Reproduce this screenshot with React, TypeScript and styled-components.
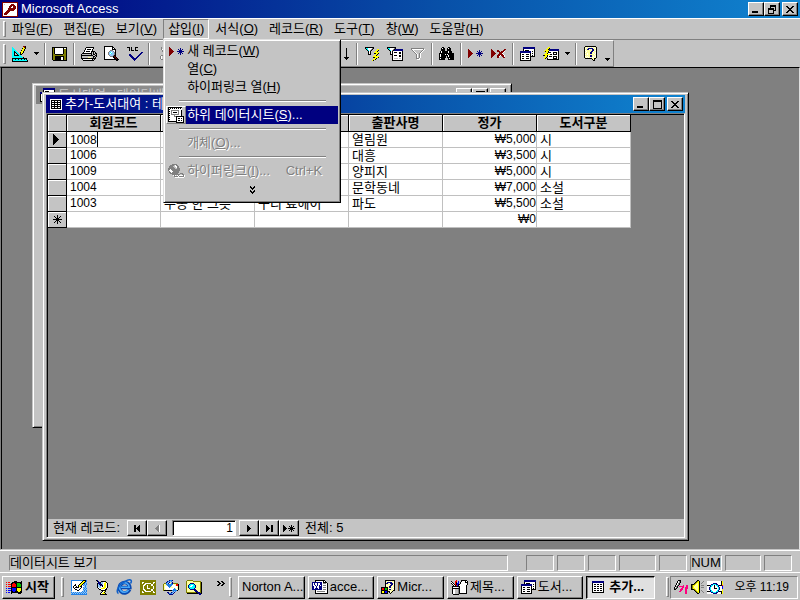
import React from "react";
import styled, { createGlobalStyle, css } from "styled-components";

const Global = createGlobalStyle`
  * { box-sizing: border-box; }
  body { margin: 0; overflow: hidden; background: #808080; }
  body, button, input, table {
    font-family: "Liberation Sans", "Noto Sans CJK KR", sans-serif;
    font-size: 13px;
    line-height: 16px;
    color: #000;
  }
  button, input { border-radius: 0; margin: 0; padding: 0; }
  svg { display: block; flex: none; }
`;

const FACE = "#c4c4c4";
const raised = css`
  border: 1px solid;
  border-color: #fff #000 #000 #fff;
  box-shadow: inset -1px -1px 0 #808080;
`;
const sunken = css`
  border: 1px solid;
  border-color: #808080 #fff #fff #808080;
`;

/* ---------- pixel drawings ---------- */

const PALETTE: Record<string, string> = {
  k: "#000000", w: "#ffffff", r: "#800000", R: "#ff0000", b: "#000080", B: "#0000ff",
  y: "#ffff00", o: "#808000", c: "#00ffff", t: "#008080", g: "#808080", l: "#c0c0c0",
  n: "#008000", G: "#00c000", m: "#ff0080", s: "#2080e8", e: "#ffffa0", q: "#90c8f8",
};

function Pixels({ rows }: { rows: string[] }) {
  const width = Math.max(...rows.map((r) => r.length));
  const runs: React.ReactNode[] = [];
  rows.forEach((row, y) => {
    let x = 0;
    while (x < row.length) {
      let end = x + 1;
      while (end < row.length && row[end] === row[x]) end++;
      if (PALETTE[row[x]]) {
        runs.push(<rect key={`${x}-${y}`} x={x} y={y} width={end - x} height={1} fill={PALETTE[row[x]]} />);
      }
      x = end;
    }
  });
  return (
    <svg width={width} height={rows.length} viewBox={`0 0 ${width} ${rows.length}`} shapeRendering="crispEdges" aria-hidden="true">
      {runs}
    </svg>
  );
}

const art = {
  key: [
    "rrrrrrrrrrrrrrrr", "rwwwwwwwwwwwwwwr", "rwlwwwwwwrrrwwwr", "rwwwwwwwrrrrrwwr",
    "rwwwwwwrrrwrrrwr", "rwwwwwwrrwwrrrwr", "rwwwwwrrrrrrrrwr", "rwwwwwrrrrrrrwwr",
    "rwwwwrrrrrrrwwwr", "rwwwrrrrwwwwwwwr", "rwwrrrrwwwwwwwwr", "rwrrrrwwwwwwwwwr",
    "rwrrrwwwwwwwwwwr", "rwwwwwwwwwwwwwwr", "rrrrrrrrrrrrrrrr",
  ],
  design: [
    "...........rrk", "c..........yrk", "cc........kyyk", "ccc.......yyk", "cccc.....kyyk",
    "cckcc....yyk", "cckkcc..kyyk", "cck.kcc.kyk", "cck..kcckk", "cckkkkkcc", "cccccccccc",
    "ccccccccccck", "kkkkkkkkkkkkkkk", "kcckcckcckcckck", "kcccccccccccccck", "kkkkkkkkkkkkkkkk",
  ],
  save: [
    "kkkkkkkkkkkkkkk", "kokwwwwwwwwkwwk", "kokwwwwwwwwkook", "kokwwwwwwwwkook", "kokwwwwwwwwkook",
    "kokwwwwwwwwkook", "kokwwwwwwwwkook", "kookkkkkkkkoook", "koooooooooooook", "kookkkkkkkkkook",
    "kookkkkkkwwkook", "kookkkkkkwwkook", "kookkkkkkwwkook", ".kkkkkkkkkkkkkk",
  ],
  print: [
    ".....kkkkkkkk", "....kwwwwwwwk", "....kwkkkkwk", "...kwwwwwwwk", "...kwkkkkwkkkk",
    "..kwwwwwwwklklk", ".kkkkkkkkkklklkk", "klllllllllklkklk", "kkkkkkkkkkkkllkk",
    "klllllllllllkklk", "klllllleeellklk", "kkkkkkkkkkkkkkk", ".kwwwwwwwwwklk", "..kkkkkkkkkkk",
  ],
  preview: [
    "kkkkkkkkk", "kwwwwwwwkk", "kwwwwwwwkwk", "kwwwwwwwkkkk", "kwwwwwgggwwk", "kwwwwgqqqgwk",
    "kwwwgqcwqqgk", "kwwwgqwcqqgk", "kwwwgqqqqqgk", "kwwwwgqqqgkk", "kwwwwwgggkrk", "kwwwwwwwwkkrk",
    "kwwwwwwwwwkkrk", "kkkkkkkkkkkkkkk", "............kk",
  ],
  spell: [
    "kkk.k...kkk", "..k.k...k...", "..k.k...k...", "..k.kkk.kkk", "",
    "..............bb", ".............bb", "..bb........bb", "..bbb......bb", "...bbb....bb",
    "....bbb..bb", ".....bbbbb", "......bbb", ".......b",
  ],
  cut: [
    "..g.....g.", "..g.....g.", "..gw...gw.", "...g...gw.", "...gw.gw..", "....g.gw..",
    "....ggw...", "....gg....", "..gggggg..", ".gw.gwg.gw", ".gw.gwg.gw", ".gw.gwg.gw", "..ggw..ggw",
  ],
  sort: [
    "bbb.......k", "..b.......k", ".b........k", "b.........k", "bbb.......k", "..........k", "..........k",
    ".rr.......k", "r..r......k", "rrrr....kkkkk", "r..r.....kkk", "r..r......k",
  ],
  filterSel: [
    "kkkkkkkkk", "kccwwwwgk", ".kcwwwgk....yy", "..kcwgk....yyk", "...kwk....yyk", "...kwk...yyyyy",
    "...kwk...kkyyk", "...kkk....yyk", ".........yyk", "........yyyyyy", "........kkyyyk",
    ".........yyk", "........yyk", ".......yk",
  ],
  filterForm: [
    "kkkkkkkkk", "kccwwwwgk", ".kcwwwgkbbbbbbbb", "..kcwgkbbbbbbbbb", "...kwkwwwwwwwwwk", "...kwkwkkkwwkkwk",
    "...kwkwwwwwwkkwk", "...kkkwwwwwwwwwk", ".....kwkkkwwkkwk", ".....kwwwwwwkkwk", ".....kwwwwwwwwwk",
    ".....kwllllwllwk", ".....kwwwwwwwwwk", ".....kkkkkkkkkkk",
  ],
  funnel: [
    "ggggggggggggg", "gwwwwwwwwwwwgw", ".gw........gw", "..gw......gw", "...gw....gw", "....gw..gw",
    ".....gw.gw", ".....gw.gw", ".....gw.gw", ".....gw.gw", ".....gggw", "......www",
  ],
  find: [
    "...kk....kk", "..kwkk..kwkk", "..kkkk..kkkk", "..kkkk..kkkk", ".kwkkkkkkwkkk", ".kwkkkkkkwkkk",
    "kkkkkkkkkkkkkkk", "kwkkkkwkwkkkkkk", "kwkkkkkkkwkkkkk", "kwkkkkk.kwkkkkk", "kkkkkkk.kkkkkkk",
    "kwkkkk...kwkkkk", "kkkkkk...kkkkkk",
  ],
  newRec: [
    "r", "rr.........b", "rrr......b.b.b", "rrrr......bbb", "rrrrr...bbbbbbb", "rrrr......bbb", "rrr......b.b.b",
    "rr.........b", "r",
  ],
  delRec: [
    "r............rr", "rr....rr....rr", "rrr...rrr.rrrw", "rrrr....rrrrw", "rrrrr...rrrw", "rrrr...rrrrrw",
    "rrr...rrrwrrrw", "rr....rrw..rrw", "r.....rr....rr",
  ],
  dbWin: [
    "...bbbbbbbbbbbb", "...bbbbbbbbbbbb", "...kwwwwwwwwwwk", "...kwkkkkwwwwwk", "bbbbbbbbbbbwkwk", "bbbbbbbbbbbwwwk",
    "kwwwwwwwwwkwkwk", "kwkkwwkkkwkwwwk", "kwwwwwwwwwkwkwk", "kwkkwwkkkwkkkkk", "kwwwwwwwwwk", "kwkkwwkkkwk",
    "kwwwwwwwwwk", "kkkkkkkkkkk",
  ],
  newObj: [
    ".....yy", "....yyk", "...yykbbbbbbbbbb", "..yyyybbbbbbbbbb", ".ykyykwwwwwwwwwk", "...yykkkwwkkkkwk",
    "..yykwwwwwkwwkwk", ".yyyyyykkwkkkkwk", "kkyykwwwwwwwwwwk", "..yykwkkkwkkkkwk", ".yyk.wwwwwkwwkwk",
    ".yk.kwwwwwkkkkwk", "....kkkkkkkkkkkk",
  ],
  help: [
    ".kkkkkkkkkkk", "kewewewewewek", "kweebbbbbeewk", "keebbwewbbeek", "kweeeeeebbewk", "keweeeebbweek",
    "kweeeebbeeewk", "keeweebbewewk", "kweweeeeeewek", "keeeeebbeeewk", "kweweebbewewk", "kewewewewewek",
    ".kkkkkkkeekk", "........kek", ".........kk",
  ],
  grid: [
    "wwwwwwwwwwww", "wkkkkkkkkkkw", "wkwwkwwkwwkw", "wkkkkkkkkkkw", "wkwwkwwkwwkw", "wkkkkkkkkkkw",
    "wkwwkwwkwwkw", "wkkkkkkkkkkw", "wkwwkwwkwwkw", "wkkkkkkkkkkw", "wwwwwwwwwwww",
  ],
  taskGrid: [
    "bbbbbbbbbbbb", "bbbbbbbbbbbb", "kwwwwwwwwwwk", "kwkkwkkwkkwk", "kwwwwwwwwwwk", "kwkkwkkwkkwk",
    "kwwwwwwwwwwk", "kwkkwkkwkkwk", "kwwwwwwwwwwk", "kwkkwkkwkkwk", "kwwwwwwwwwwk", "kkkkkkkkkkkk",
  ],
  subsheet: [
    "kkkkkkkkkkkkkk", "kwkwkwkwkwkwkw", "kkwwwwwwwwwwww", "kwwggggggggwwk", "kkwgwwwwwwgwwk", "kwwgwkkkkwgwwk",
    "kkwgwwwwwwgwwk", "kwwggggggggwwk", "kkwwwwgwwwwwwk", "kwwwwwggkkkkkkkk", "kkwwwwwwkwwwwwwk",
    "kwwwwwwwkwkkwkwk", "kkwwwwwwkwwwwwwk", "kwwwwwwwkwkkwkwk", "kkkkkkkkkwwwwwwk", "........kkkkkkkk",
  ],
  globe: [
    "....ggggg", "..gggglwgg", ".ggggllwwgg", ".gggggllwgg", "gggggggllggg", "ggwggggggggg", "gwwwgggggggg",
    ".gwwwgggggg", ".ggwggggggg", "..gggggggg..ggg", "....gggggggg..gg", ".....wgw.wgwwwwgw", "......ggggwgggggw", ".......wwwwwwwww",
  ],
  flag: [
    "........kkk....k", "R.RR..kkkkkkkkkk", ".....kkRRkkGGGkk", "R.RRRkRRRRkGGGGk", ".....kRRRRkGGGGk",
    "R.RRRkRRRRkGGGGk", ".....kkkkkkkkkkk", "B.BBBkBBBBkyyyyk", ".....kBBBBkyyyyk", "B.BBBkBBBBkyyyyk",
    ".....kkBBkkkyykk", "B.BB.kkkkkkkkkkk", ".....k......kkk",
  ],
  expand: ["k...k", "kk.kk", ".kkk.", "..k..", "k...k", "kk.kk", ".kkk.", "..k.."],
  chevrons: ["kk..kk..", ".kk..kk.", "..kk..kk", ".kk..kk.", "kk..kk.."],
  down: ["kkkkk", ".kkk.", "..k.."],
  min: ["", "", "", "", "", "", "kkkkkk..", "kkkkkk.."],
  max: ["kkkkkkkkk", "kkkkkkkkk", "k.......k", "k.......k", "k.......k", "k.......k", "k.......k", "k.......k", "kkkkkkkkk"],
  restore: ["..kkkkkk", "..kkkkkk", "..k....k", "kkkkkk.k", "kkkkkk.k", "k....kkk", "k....k..", "k....k..", "kkkkkk.."],
  close: ["kk....kk", ".kk..kk.", "..kkkk..", "...kk...", "..kkkk..", ".kk..kk.", "kk....kk"],
  current: ["k", "kk", "kkk", "kkkk", "kkkkk", "kkkkkk", "kkkkk", "kkkk", "kkk", "kk", "k"],
  star: ["....k", ".k..k..k", "..k.k.k", "...kkk", "kkkkkkkkk", "...kkk", "..k.k.k", ".k..k..k", "....k"],
  first: ["kk...k", "kk..kk", "kk.kkk", "kkkkkk", "kk.kkk", "kk..kk", "kk...k"],
  prev: ["...gw", "..ggw", ".gggw", "ggggw", ".gggw", "..ggw", "...gw"],
  next: ["k", "kk", "kkk", "kkkk", "kkk", "kk", "k"],
  last: ["k....kk", "kk...kk", "kkk..kk", "kkkk.kk", "kkk..kk", "kk...kk", "k....kk"],
  add: ["k.......k", "kk....k.k.k", "kkk....kkk", "kkkk.kkkkkkk", "kkk....kkk", "kk....k.k.k", "k.......k"],
  desktop: [
    "sssssssssssskkks", "swwwwwwwwwwkyyks", "swwwwwwwwwkyyksq", "swwwwwwwwkyyksqs", "swwwkwwwkyykqsqs", "swwkkwwkyykwsqsq",
    "swkwwkwkykkwwqsq", "swkwkkkkwwkwsqsq", "swwkwwwwwkwwqsqs", "swwwkkwwkwwwsqsq", "swwwwwkkwwwwqsqs", "qwwwwwwwwwwsqsqs",
    "sqsqsqsqsqsqsqsq", "qsqsqsqsqsqsqsqs", "ssssssssssssssss",
  ],
  dish: [
    "kb", ".kb..kkkkk", "..bbkqqwwyk", ".kbbbqqwyywk", ".kqbbkqwyywk", ".kqqkBkwyywk", ".kqqqwkwyywk",
    ".kwqqwwyyywk", "..kwwyyyywk", "...kkwwwwkk", ".....kkkkk", "......kwyk", ".....kwyk", "....kwyyyk", "....kkkkkkk",
  ],
  clock: [
    "oooooooooooooooo", "oooooooooooooooo", "oowwooooooooowwo", "oowoowwwwwwoowoo", "oooowwooooowwooo", "ooowwoowooowwooo",
    "ooowooowooooowoo", "ooowooowooooowoo", "ooowooowwwooowoo", "ooowwoooooowwooo", "oooowwooooowwooo", "oowoowwwwwwoowoo",
    "oowwooooooooowwo", "oooooooooooooooo", "oooooooooooooooo",
  ],
  mail: [
    "......bssb", "....bssqs", "...bsqb..b", ".oosqbeesbooooo", "oeesssssssweeRRk", "oeeessssswwweRRk", "oewwwsssewwwwwek",
    "oewwwwseeewwwwek", "oewwwwwwwwwsewek", "oeewwwwwwwsssewk", "okkkkkkkksssssk", "..........sqs", "....bb..bsqb", ".....bsssqb", "......bbbb",
  ],
  search: [
    ".oooooo", "oeeeeeeoooooooo", "oeeeeeeeeeeeeeok", "oeeebbbbeeeeeeok", "oeebccccbeeeeeok", "oebccwwccbeeeeok", "oebcwwcccbeeeeok",
    "oebccccccbeeeeok", "oeebccccbeeeeeok", "oeeebbbbbbeeeeok", "oeeeeeeebbbeeeok", "oeeeeeeeebbbeeok", "ooooooooookbbbok", ".kkkkkkkkkkkbbbk", ".............bb",
  ],
  word: [
    "...kkkkkkkkkk", "...kwwwwwwwkwk", "bbbbbbbbbbwkkkk", "bwbwwbwwbbwgggwk", "bwbwwbwwbbwwwwwk", "bwwbwbwbwbwgggwk", "bbwwbwwbbbwwwwwk",
    "bbwwbwwbbbwgggwk", "bbwbbbwbbbwwwwwk", "bbbbbbbbbbwgggwk", "...kwwwwwwwwwwwk", "...kwggggggggwwk", "...kwwwwwwwwwwwk", "...kkkkkkkkkkkkk",
  ],
  helpWin: [
    "....kkkkkkkkkk", "....keweweweek", "....kebbbbbewk", "....kbbewbbbek", "....keeeeebbwk", "....kwewebbeek", "....keeebbewek",
    "kkkkkkkebbeewk", "kRRkGGkeewewek", "kRRkGGkebbeewk", "kkkkkkkeeeeekk", "kyykBBkkkwek", "kyykBBk.kek", "kkkkkkk..k",
  ],
  paint: [
    ".....R....kkkkkk", "k...RR.B..kwwwkwk", "wk..Rk.B.kwwwwkkk", "kwk.RkBB.kwwwwwwk", ".kwkRkBkkwwwwwwwk", "..kwkRBkwwwwwwwk",
    ".kkkkkkkkwwwwwwk", ".kwwwwwlkwwwwwwk", ".kkkkkkkkwwwwwwk", ".kwwlllgkwwwwwwk", ".kwwlllgkwwwwwwk", ".kwwlllgkwwwwwwk",
    ".kwwlllgkwwwwwwk", ".kwwlllgkkkkkkkk", "..kkkkkk",
  ],
  ime: [
    "....kkk", "...kwgk", "...kwgk", "..kwgk", "..kwgk.", ".kwgk....m..mm", ".kgk.mmmmm..mm", "kwgk....mm.mmm", "kgk....mm..mmm",
    "kk....mmm..mm", "......mm...mm", ".....mm....mm", "...........mm", "...........mm",
  ],
  speaker: [
    "......kk", ".....koyk...g", "....koyyk..g", "...koyeyk.g", "kkkoyeeyk", "koyyeeeyk.ggg", "koyeeeeyk", "koyeeeeyk.ggg",
    "koyyeeeyk", "kkkoyeeyk", "...koyeyk.g", "....koyyk..g", ".....koyk...g", "......kk",
  ],
  trayClock: [
    "wwwwwwwwwwwwwwky", "wwwwwwwwwwwwwwky", "wwwwwwbbbbwwwwky", "wwwwbbcccbbwwwky", "kkkbccwkwccbkkkR", "wwwbcwwkwwcbwwwB",
    "wwbcwwwkwwwcbwwB", "wwbcwwwkkkwcbwwB", "wwbcwwwwwwwcbwwy", "wwwbcwwwwwcbwwwy", "kkkbccwwwccbkkky", "wwwwbbcccbbwwwky", "wwwwwwbbbbwwwwky",
  ],
};
type ArtName = keyof typeof art;
const Art = ({ name }: { name: ArtName }) => <Pixels rows={art[name]} />;

const ExplorerLogo = () => (
  <svg width="17" height="16" viewBox="0 0 17 16" aria-hidden="true">
    <path d="M13.5 10.5A5.2 5.2 0 1 1 13.8 8.5H5" fill="none" stroke="#0848b0" strokeWidth="3.6" />
    <path d="M12.6 10.8A4.8 4.8 0 1 1 13.2 8.2H5" fill="none" stroke="#48a8f8" strokeWidth="1.6" />
    <path d="M2.5 14.5C-1 13 3 5 9 2.5C14-.5 17 1 14.5 4.5" fill="none" stroke="#1060c8" strokeWidth="1.5" />
  </svg>
);

/* ---------- application frame ---------- */

const Screen = styled.div`
  display: flex;
  flex-direction: column;
  height: 100vh;
  background: ${FACE};
  white-space: nowrap;
  cursor: default;
`;

const TitleBar = styled.header<{ $child?: boolean; $inactive?: boolean }>`
  display: flex;
  align-items: center;
  flex: none;
  gap: 3px;
  height: 18px;
  padding: 0 2px 0 ${(p) => (p.$child ? 4 : 2)}px;
  color: ${(p) => (p.$inactive ? "#c8c8c8" : "#fff")};
  background: ${(p) =>
    p.$inactive ? "linear-gradient(90deg, #808080, #b8b8b8)" : "linear-gradient(90deg, #000080, #0850a8 55%, #1084d0)"};
`;

const Caption = styled.span`
  flex: 1;
  min-width: 0;
  overflow: hidden;
`;

const CaptionButtons = styled.div`
  display: flex;
  flex: none;
`;

const CaptionButton = styled.button`
  display: flex;
  align-items: center;
  justify-content: center;
  width: 16px;
  height: 14px;
  background: ${FACE};
  ${raised}
  &:last-child { margin-left: 2px; }
`;

const MenuBar = styled.nav`
  display: flex;
  align-items: center;
  flex: none;
  gap: 1px;
  height: 22px;
  padding: 0 3px;
  border-top: 1px solid #fff;
  border-bottom: 1px solid #808080;
`;

const Grip = styled.span<{ $tall?: boolean }>`
  flex: none;
  width: 3px;
  height: ${(p) => (p.$tall ? 20 : 16)}px;
  border: 1px solid;
  border-color: #fff #808080 #808080 #fff;
`;

const MenuSlot = styled.div`
  position: relative;
`;

const MenuButton = styled.button<{ $open?: boolean }>`
  display: block;
  height: 20px;
  padding: 0 4px;
  border: 1px solid transparent;
  background: none;
  ${(p) => p.$open && css`border-color: #808080 #fff #fff #808080;`}
`;

const Popup = styled.div`
  position: absolute;
  z-index: 10;
  top: 20px;
  left: 0;
  width: 178px;
  padding: 2px;
  border: 1px solid;
  border-color: #e0e0e0 #000 #000 #e0e0e0;
  background: ${FACE};
  box-shadow: inset 1px 1px 0 #fff, inset -1px -1px 0 #808080;
`;

const PopupItem = styled.button<{ $active?: boolean }>`
  display: flex;
  align-items: center;
  width: 100%;
  height: 18px;
  border: 0;
  background: none;
  text-align: left;
  &:disabled { color: #808080; text-shadow: 1px 1px 0 #fff; }
  ${(p) => p.$active && css`color: #fff; background: linear-gradient(90deg, ${FACE} 20px, #000080 20px);`}
`;

const PopupIcon = styled.span<{ $raised?: boolean }>`
  display: flex;
  align-items: center;
  justify-content: center;
  flex: none;
  width: 20px;
  height: 18px;
  margin-right: 1px;
  ${(p) => p.$raised && css`border: 1px solid; border-color: #fff #808080 #808080 #fff;`}
`;

const Shortcut = styled.span`
  margin-left: auto;
  padding-right: 16px;
`;

const PopupLine = styled.div`
  height: 2px;
  margin: 4px 12px 4px 13px;
  border-top: 1px solid #808080;
  border-bottom: 1px solid #fff;
`;

const PopupMore = styled.button`
  display: flex;
  align-items: center;
  justify-content: center;
  width: 100%;
  height: 20px;
  border: 0;
  background: none;
`;

const ToolBarRow = styled.div`
  display: flex;
  flex: none;
  height: 27px;
`;

const ToolBar = styled.div`
  display: flex;
  align-items: center;
  padding: 0 1px 0 3px;
  border-top: 1px solid #fff;
  border-right: 1px solid #808080;
  border-bottom: 1px solid #808080;
`;

const ToolButton = styled.button<{ $first?: boolean }>`
  display: flex;
  align-items: center;
  justify-content: center;
  flex: none;
  width: 23px;
  height: 22px;
  border: 0;
  background: none;
  ${(p) => p.$first && css`margin-left: 2px;`}
`;

const DropButton = styled(ToolButton)<{ $low?: boolean }>`
  width: 11px;
  ${(p) => p.$low && css`align-items: flex-end; padding-bottom: 4px; width: 10px;`}
`;

const ToolLine = styled.span`
  flex: none;
  width: 2px;
  height: 22px;
  margin: 0 2px;
  border-left: 1px solid #808080;
  border-right: 1px solid #fff;
`;

/* ---------- workspace and its windows ---------- */

const Workspace = styled.main`
  position: relative;
  flex: 1;
  min-height: 0;
  overflow: hidden;
  border: 1px solid;
  border-color: #000 #e0e0e0 ${FACE} #808080;
  background: #808080;
  box-shadow: inset 1px 0 0 #000;
`;

const ChildWindow = styled.section<{ $x: number; $y: number; $w: number; $h: number }>`
  position: absolute;
  left: ${(p) => p.$x}px;
  top: ${(p) => p.$y}px;
  width: ${(p) => p.$w}px;
  height: ${(p) => p.$h}px;
  display: flex;
  flex-direction: column;
  padding: 2px 3px;
  border: 1px solid;
  border-color: ${FACE} #000 #000 ${FACE};
  background: ${FACE};
  box-shadow: inset 1px 1px 0 #fff, inset -1px -1px 0 #808080;
`;

const Client = styled.div`
  display: flex;
  flex-direction: column;
  flex: 1;
  min-height: 0;
  border: 1px solid;
  border-color: #808080 #fff #fff #808080;
  background: #808080;
  box-shadow: inset 1px 1px 0 #000;
  padding: 1px 0 0 1px;
`;

const SheetArea = styled.div`
  flex: 1;
  min-height: 0;
  overflow: hidden;
`;

const Sheet = styled.table`
  table-layout: fixed;
  width: 583px;
  border-collapse: separate;
  border-spacing: 0;
`;

const Column = styled.col<{ $w: number }>`
  width: ${(p) => p.$w}px;
`;

const HeadCell = styled.th`
  height: 17px;
  padding: 0;
  overflow: hidden;
  line-height: 14px;
  border-right: 1px solid #000;
  border-bottom: 1px solid #000;
  background: ${FACE};
  box-shadow: inset 1px 1px 0 #fff;
`;

const RowHead = styled.th`
  height: 16px;
  padding: 0 0 0 5px;
  border-right: 1px solid #000;
  border-bottom: 1px solid #000;
  background: ${FACE};
  box-shadow: inset 1px 1px 0 #fff;
`;

const Cell = styled.td<{ $digits?: boolean; $right?: boolean }>`
  height: 16px;
  padding: 0 ${(p) => (p.$right ? 0 : 3)}px 0 3px;
  overflow: hidden;
  font-size: ${(p) => (p.$digits ? 12 : 13)}px;
  line-height: 15px;
  text-align: ${(p) => (p.$right ? "right" : "left")};
  border-right: 1px solid #c0c0c0;
  border-bottom: 1px solid #c0c0c0;
  background: #fff;
`;

const CellEdit = styled.span`
  display: flex;
  align-items: center;
  height: 15px;
`;

const CellInput = styled.input`
  width: 28px;
  height: 15px;
  border: 0;
  border-right: 1px solid #000;
  outline: 0;
  background: none;
  font-size: 12px;
`;

const Navigator = styled.form`
  display: flex;
  align-items: center;
  flex: none;
  height: 18px;
  padding-left: 5px;
  background: ${FACE};
`;

const NavLabel = styled.label`
  margin-right: 7px;
`;

const NavButton = styled.button`
  display: flex;
  align-items: center;
  justify-content: center;
  width: 20px;
  height: 16px;
  background: ${FACE};
  ${raised}
`;

const NavInput = styled.input`
  width: 64px;
  height: 16px;
  margin: 0 3px 0 5px;
  padding-right: 2px;
  font-size: 12px;
  text-align: right;
  background: #fff;
  border: 1px solid;
  border-color: #808080 #fff #fff #808080;
  box-shadow: inset 1px 1px 0 #000;
`;

const NavTotal = styled.span`
  margin-left: 6px;
`;

/* ---------- status bar and task bar ---------- */

const StatusBar = styled.footer`
  display: flex;
  flex: none;
  gap: 3px;
  height: 22px;
  padding: 4px 8px 1px 9px;
  border-top: 1px solid #fff;
`;

const StatusPanel = styled.div<{ $w?: number }>`
  ${(p) => (p.$w ? css`flex: none; width: ${p.$w}px;` : css`flex: 1; margin-right: 15px;`)}
  height: 16px;
  overflow: hidden;
  line-height: 14px;
  text-align: ${(p) => (p.$w ? "center" : "left")};
  ${sunken}
`;

const TaskBar = styled.footer`
  display: flex;
  align-items: center;
  flex: none;
  height: 28px;
  padding: 1px 2px 0;
  border-top: 1px solid #fff;
`;

const StartButton = styled.button`
  display: flex;
  align-items: center;
  gap: 3px;
  flex: none;
  width: 53px;
  height: 23px;
  padding-left: 3px;
  margin-right: 6px;
  font-weight: bold;
  background: ${FACE};
  ${raised}
`;

const QuickLaunch = styled.div`
  display: flex;
  align-items: center;
  flex: none;
  width: 165px;
  padding-left: 3px;
`;

const QuickButton = styled.button`
  display: flex;
  align-items: center;
  justify-content: center;
  width: 23px;
  height: 22px;
  border: 0;
  background: none;
`;

const QuickMore = styled(QuickButton)`
  align-items: flex-start;
  width: 16px;
  padding-top: 5px;
  margin-left: auto;
`;

const Tasks = styled.div`
  display: flex;
  flex: 1;
  gap: 3px;
  min-width: 0;
  margin: 0 11px 0 6px;
`;

const Task = styled.button<{ $active?: boolean }>`
  display: flex;
  align-items: center;
  gap: 2px;
  flex: 1 1 0;
  min-width: 0;
  height: 23px;
  padding: 0 0 0 3px;
  overflow: hidden;
  background: ${FACE};
  ${raised}
  ${(p) =>
    p.$active &&
    css`
      gap: 5px;
      padding-left: 5px;
      font-weight: bold;
      background: #e0e0e0;
      border-color: #000 #fff #fff #000;
      box-shadow: inset 1px 1px 0 #808080;
    `}
`;

const Tray = styled.div`
  display: flex;
  align-items: center;
  flex: none;
  gap: 3px;
  width: 128px;
  height: 23px;
  margin-left: 1px;
  padding: 0 8px 0 3px;
  ${sunken}
`;

const Time = styled.time`
  margin-left: auto;
  font-size: 12px;
`;

/* ---------- content ---------- */

const Access = ({ text, letter }: { text: string; letter: string }) => (
  <span>
    {text}(<u>{letter}</u>)
  </span>
);

const menus: [string, string][] = [
  ["파일", "F"], ["편집", "E"], ["보기", "V"], ["삽입", "I"], ["서식", "O"],
  ["레코드", "R"], ["도구", "T"], ["창", "W"], ["도움말", "H"],
];

const tools: { icon: ArtName | "line" | "drop" | "blank"; label?: string }[] = [
  { icon: "design", label: "보기" }, { icon: "drop" }, { icon: "line" },
  { icon: "save", label: "저장" }, { icon: "line" },
  { icon: "print", label: "인쇄" }, { icon: "preview", label: "인쇄 미리 보기" }, { icon: "spell", label: "맞춤법 검사" }, { icon: "line" },
  { icon: "cut", label: "잘라내기" }, { icon: "blank" }, { icon: "blank" }, { icon: "blank" }, { icon: "line" },
  { icon: "blank" }, { icon: "line" }, { icon: "blank" }, { icon: "line" },
  { icon: "blank" }, { icon: "sort", label: "내림차순 정렬" }, { icon: "line" },
  { icon: "filterSel", label: "선택 필터" }, { icon: "filterForm", label: "폼 필터" }, { icon: "funnel", label: "필터 적용" }, { icon: "line" },
  { icon: "find", label: "찾기" }, { icon: "line" },
  { icon: "newRec", label: "새 레코드" }, { icon: "delRec", label: "레코드 삭제" }, { icon: "line" },
  { icon: "dbWin", label: "데이터베이스 창" }, { icon: "newObj", label: "새 개체" }, { icon: "drop" }, { icon: "line" },
  { icon: "help", label: "도움말" },
];

const records = [
  ["1008", "", "", "열림원", "₩5,000", "시"],
  ["1006", "", "", "대흥", "₩3,500", "시"],
  ["1009", "", "", "양피지", "₩5,000", "시"],
  ["1004", "", "", "문학동네", "₩7,000", "소설"],
  ["1003", "우동 한 그릇", "구리 료헤이", "파도", "₩5,500", "소설"],
  ["", "", "", "", "₩0", ""],
];

const WindowButtons = ({ middle }: { middle: ArtName }) => (
  <CaptionButtons>
    <CaptionButton aria-label="최소화"><Art name="min" /></CaptionButton>
    <CaptionButton aria-label="최대화"><Art name={middle} /></CaptionButton>
    <CaptionButton aria-label="닫기"><Art name="close" /></CaptionButton>
  </CaptionButtons>
);

const InsertMenu = () => (
  <Popup role="menu">
    <PopupItem><PopupIcon><Art name="newRec" /></PopupIcon><Access text="새 레코드" letter="W" /></PopupItem>
    <PopupItem><PopupIcon /><Access text="열" letter="C" /></PopupItem>
    <PopupItem><PopupIcon /><Access text="하이퍼링크 열" letter="H" /></PopupItem>
    <PopupLine />
    <PopupItem $active><PopupIcon $raised><Art name="subsheet" /></PopupIcon><Access text="하위 데이터시트" letter="S" />...</PopupItem>
    <PopupLine />
    <PopupItem disabled><PopupIcon /><Access text="개체" letter="O" />...</PopupItem>
    <PopupLine />
    <PopupItem disabled>
      <PopupIcon><Art name="globe" /></PopupIcon><Access text="하이퍼링크" letter="I" />...
      <Shortcut>Ctrl+K</Shortcut>
    </PopupItem>
    <PopupMore aria-label="더 보기"><Art name="expand" /></PopupMore>
  </Popup>
);

const Datasheet = () => (
  <Sheet>
    <colgroup>
      <Column $w={19} />
      {records.map((_, i) => <Column key={i} $w={94} />)}
    </colgroup>
    <thead>
      <tr>
        <HeadCell />
        {["회원코드", "", "", "출판사명", "정가", "도서구분"].map((h, i) => <HeadCell key={i} scope="col">{h}</HeadCell>)}
      </tr>
    </thead>
    <tbody>
      {records.map((record, row) => (
        <tr key={row}>
          <RowHead scope="row">
            {row === 0 && <Art name="current" />}
            {row === records.length - 1 && <Art name="star" />}
          </RowHead>
          {record.map((value, col) => (
            <Cell key={col} $digits={col === 0 || col === 4} $right={col === 4}>
              {row === 0 && col === 0 ? (
                <CellEdit><CellInput aria-label="회원코드" defaultValue={value} /></CellEdit>
              ) : (
                value
              )}
            </Cell>
          ))}
        </tr>
      ))}
    </tbody>
  </Sheet>
);

const tasks: { icon?: ArtName; text: string; active?: boolean }[] = [
  { text: "Norton A..." }, { icon: "word", text: "acce..." }, { icon: "helpWin", text: "Micr..." },
  { icon: "paint", text: "제목..." }, { icon: "dbWin", text: "도서..." }, { icon: "taskGrid", text: "추가...", active: true },
];

export default function App() {
  return (
    <Screen>
      <Global />
      <TitleBar>
        <Art name="key" />
        <Caption>Microsoft Access</Caption>
        <WindowButtons middle="restore" />
      </TitleBar>

      <MenuBar>
        <Grip />
        {menus.map(([text, letter]) => (
          <MenuSlot key={text}>
            <MenuButton $open={letter === "I"}><Access text={text} letter={letter} /></MenuButton>
            {letter === "I" && <InsertMenu />}
          </MenuSlot>
        ))}
      </MenuBar>

      <ToolBarRow>
        <ToolBar role="toolbar">
          <Grip $tall />
          {tools.map((tool, i) => {
            if (tool.icon === "line") return <ToolLine key={i} />;
            if (tool.icon === "drop") return <DropButton key={i} aria-label="목록"><Art name="down" /></DropButton>;
            if (tool.icon === "blank") return <ToolButton key={i} tabIndex={-1} />;
            return <ToolButton key={i} $first={i === 0} aria-label={tool.label}><Art name={tool.icon} /></ToolButton>;
          })}
          <DropButton $low aria-label="추가 단추"><Art name="down" /></DropButton>
        </ToolBar>
      </ToolBarRow>

      <Workspace>
        <ChildWindow $x={31} $y={15} $w={480} $h={345}>
          <TitleBar $child $inactive>
            <Art name="dbWin" />
            <Caption>도서대여 : 데이터베이스</Caption>
            <WindowButtons middle="max" />
          </TitleBar>
        </ChildWindow>
        <ChildWindow $x={41} $y={24} $w={647} $h={449}>
          <TitleBar $child>
            <Art name="grid" />
            <Caption>추가-도서대여 : 테이블</Caption>
            <WindowButtons middle="max" />
          </TitleBar>
          <Client>
            <SheetArea><Datasheet /></SheetArea>
            <Navigator onSubmit={(e) => e.preventDefault()}>
              <NavLabel htmlFor="record">현재 레코드:</NavLabel>
              <NavButton type="button" aria-label="처음"><Art name="first" /></NavButton>
              <NavButton type="button" aria-label="이전" disabled><Art name="prev" /></NavButton>
              <NavInput id="record" defaultValue="1" />
              <NavButton type="button" aria-label="다음"><Art name="next" /></NavButton>
              <NavButton type="button" aria-label="마지막"><Art name="last" /></NavButton>
              <NavButton type="button" aria-label="새 레코드"><Art name="add" /></NavButton>
              <NavTotal>전체: 5</NavTotal>
            </Navigator>
          </Client>
        </ChildWindow>
      </Workspace>

      <StatusBar>
        <StatusPanel>데이터시트 보기</StatusPanel>
        <StatusPanel $w={28} />
        <StatusPanel $w={28} />
        <StatusPanel $w={28} />
        <StatusPanel $w={37} />
        <StatusPanel $w={28} />
        <StatusPanel $w={32}>NUM</StatusPanel>
        <StatusPanel $w={36} />
        <StatusPanel $w={28} />
      </StatusBar>

      <TaskBar>
        <StartButton><Art name="flag" />시작</StartButton>
        <Grip $tall />
        <QuickLaunch>
          <QuickButton aria-label="바탕 화면 보기"><Art name="desktop" /></QuickButton>
          <QuickButton aria-label="채널 보기"><Art name="dish" /></QuickButton>
          <QuickButton aria-label="Internet Explorer"><ExplorerLogo /></QuickButton>
          <QuickButton aria-label="Outlook"><Art name="clock" /></QuickButton>
          <QuickButton aria-label="Outlook Express"><Art name="mail" /></QuickButton>
          <QuickButton aria-label="탐색"><Art name="search" /></QuickButton>
          <QuickMore aria-label="더 보기"><Art name="chevrons" /></QuickMore>
        </QuickLaunch>
        <Grip $tall />
        <Tasks>
          {tasks.map((task) => (
            <Task key={task.text} $active={task.active}>
              {task.icon && <Art name={task.icon} />}
              {task.text}
            </Task>
          ))}
        </Tasks>
        <Grip $tall />
        <Tray>
          <Art name="ime" />
          <Art name="speaker" />
          <Art name="trayClock" />
          <Time>오후 11:19</Time>
        </Tray>
      </TaskBar>
    </Screen>
  );
}
